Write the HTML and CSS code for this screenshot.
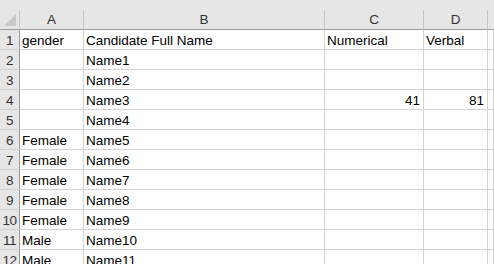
FILE: index.html
```html
<!DOCTYPE html>
<html lang="en">
<head>
    <meta charset="UTF-8">
    <title>Sheet1</title>
    <link rel="stylesheet" href="styles.css">
</head>
<body>
    <div class="toolbar-edge"></div>
    <div class="sheet">
        <div class="corner"><span class="corner-mark"></span></div>
        <div class="col-head">A</div>
        <div class="col-head">B</div>
        <div class="col-head">C</div>
        <div class="col-head">D</div>
        <div class="col-head col-rest"></div>

        <div class="row-head">1</div>
        <div class="cell">gender</div>
        <div class="cell">Candidate Full Name</div>
        <div class="cell">Numerical</div>
        <div class="cell">Verbal</div>
        <div class="cell"></div>

        <div class="row-head">2</div>
        <div class="cell"></div>
        <div class="cell">Name1</div>
        <div class="cell"></div>
        <div class="cell"></div>
        <div class="cell"></div>

        <div class="row-head">3</div>
        <div class="cell"></div>
        <div class="cell">Name2</div>
        <div class="cell"></div>
        <div class="cell"></div>
        <div class="cell"></div>

        <div class="row-head">4</div>
        <div class="cell"></div>
        <div class="cell">Name3</div>
        <div class="cell num">41</div>
        <div class="cell num">81</div>
        <div class="cell"></div>

        <div class="row-head">5</div>
        <div class="cell"></div>
        <div class="cell">Name4</div>
        <div class="cell"></div>
        <div class="cell"></div>
        <div class="cell"></div>

        <div class="row-head">6</div>
        <div class="cell">Female</div>
        <div class="cell">Name5</div>
        <div class="cell"></div>
        <div class="cell"></div>
        <div class="cell"></div>

        <div class="row-head">7</div>
        <div class="cell">Female</div>
        <div class="cell">Name6</div>
        <div class="cell"></div>
        <div class="cell"></div>
        <div class="cell"></div>

        <div class="row-head">8</div>
        <div class="cell">Female</div>
        <div class="cell">Name7</div>
        <div class="cell"></div>
        <div class="cell"></div>
        <div class="cell"></div>

        <div class="row-head">9</div>
        <div class="cell">Female</div>
        <div class="cell">Name8</div>
        <div class="cell"></div>
        <div class="cell"></div>
        <div class="cell"></div>

        <div class="row-head">10</div>
        <div class="cell">Female</div>
        <div class="cell">Name9</div>
        <div class="cell"></div>
        <div class="cell"></div>
        <div class="cell"></div>

        <div class="row-head">11</div>
        <div class="cell">Male</div>
        <div class="cell">Name10</div>
        <div class="cell"></div>
        <div class="cell"></div>
        <div class="cell"></div>

        <div class="row-head">12</div>
        <div class="cell">Male</div>
        <div class="cell">Name11</div>
        <div class="cell"></div>
        <div class="cell"></div>
        <div class="cell"></div>
    </div>
</body>
</html>
```

FILE: styles.css
```css
body {
    margin: 0;
    padding: 0;
    overflow: hidden;
    background-color: #ffffff;
    font-family: "Liberation Sans", Arial, sans-serif;
    font-size: 13.5px;
    color: #000000;
}

.toolbar-edge {
    height: 10px;
    background-color: #e6e6e6;
}

.sheet {
    display: grid;
    grid-template-columns: 20px 64px 241px 99px 64px 1fr;
    grid-auto-rows: 20px;
}

.sheet > div {
    box-sizing: border-box;
    border-right: 1px solid #d4d4d4;
    border-bottom: 1px solid #d4d4d4;
    white-space: nowrap;
    overflow: hidden;
}

.corner {
    position: relative;
    background-color: #e6e6e6;
}

.sheet > .corner,
.sheet > .col-head {
    border-bottom-color: #9b9b9b;
    border-right-color: #c4c4c4;
}

.corner-mark {
    position: absolute;
    right: 3px;
    bottom: 3px;
    width: 0;
    height: 0;
    border-left: 12px solid transparent;
    border-bottom: 12px solid #c9c9c9;
}

.col-head {
    background-color: #e6e6e6;
    color: #333333;
    text-align: center;
    line-height: 19px;
}

.sheet > .col-rest {
    border-right: none;
}

.sheet > .row-head {
    background-color: #e6e6e6;
    color: #333333;
    text-align: center;
    line-height: 21px;
    border-right-color: #9b9b9b;
    border-bottom-color: #d0d0d0;
    letter-spacing: -0.5px;
}

.cell {
    padding: 0 2px;
    line-height: 21px;
}

.num {
    text-align: right;
    padding-right: 3px;
}
```
